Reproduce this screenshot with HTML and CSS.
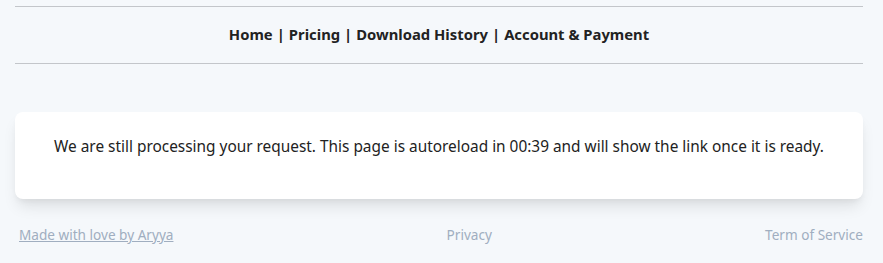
FILE: index.html
```
<!DOCTYPE html>
<html>
  <head>
    <meta charset="utf-8">
    <link rel="stylesheet" href="styles.css">
  </head>
  <body>
    <div class="page">
      <nav class="menu">
        <a href="#">Home</a> | <a href="#">Pricing</a> | <a href="#">Download History</a> | <a href="#">Account &amp; Payment</a>
      </nav>
      <div class="card">
        <p>We are still processing your request. This page is autoreload in <span id="timer">00:39</span> and will show the link once it is ready.</p>
      </div>
      <footer class="footer">
        <a href="#" class="love">Made with love by Aryya</a>
        <a href="#">Privacy</a>
        <a href="#">Term of Service</a>
      </footer>
    </div>
  </body>
</html>
```
FILE: styles.css
```
body{
  margin: 0;
  background: #f5f8fb;
  font-family: "Noto Sans", sans-serif;
  color: #222;
}
.page{
  width: 848px;
  margin-left: 15px;
  padding-top: 6px;
}
.menu{
  border-top: 1px solid #c3c6ca;
  border-bottom: 1px solid #c3c6ca;
  height: 56px;
  padding-bottom: 2px;
  box-sizing: border-box;
  height: 58px;
  display: flex;
  align-items: center;
  justify-content: center;
  gap: 4px;
  font-weight: 700;
  font-size: 14.8px;
  color: #222;
}
.menu a{
  color: #222;
  text-decoration: none;
}
.card{
  margin-top: 48px;
  background: #fff;
  border-radius: 8px;
  box-shadow: 0 10px 15px -3px rgba(0,0,0,0.1), 0 4px 6px -2px rgba(0,0,0,0.05);
  padding: 23px 24px 40px;
  text-align: center;
}
.card p{
  margin: 0;
  font-size: 15.4px;
  line-height: 24px;
}
.footer{
  display: flex;
  justify-content: space-between;
  padding: 24px 0 0 4px;
  font-size: 13.6px;
  line-height: 24px;
}
.footer a{
  color: #a0aec0;
  text-decoration: none;
}
.footer a.love{
  text-decoration: underline;
}
```
